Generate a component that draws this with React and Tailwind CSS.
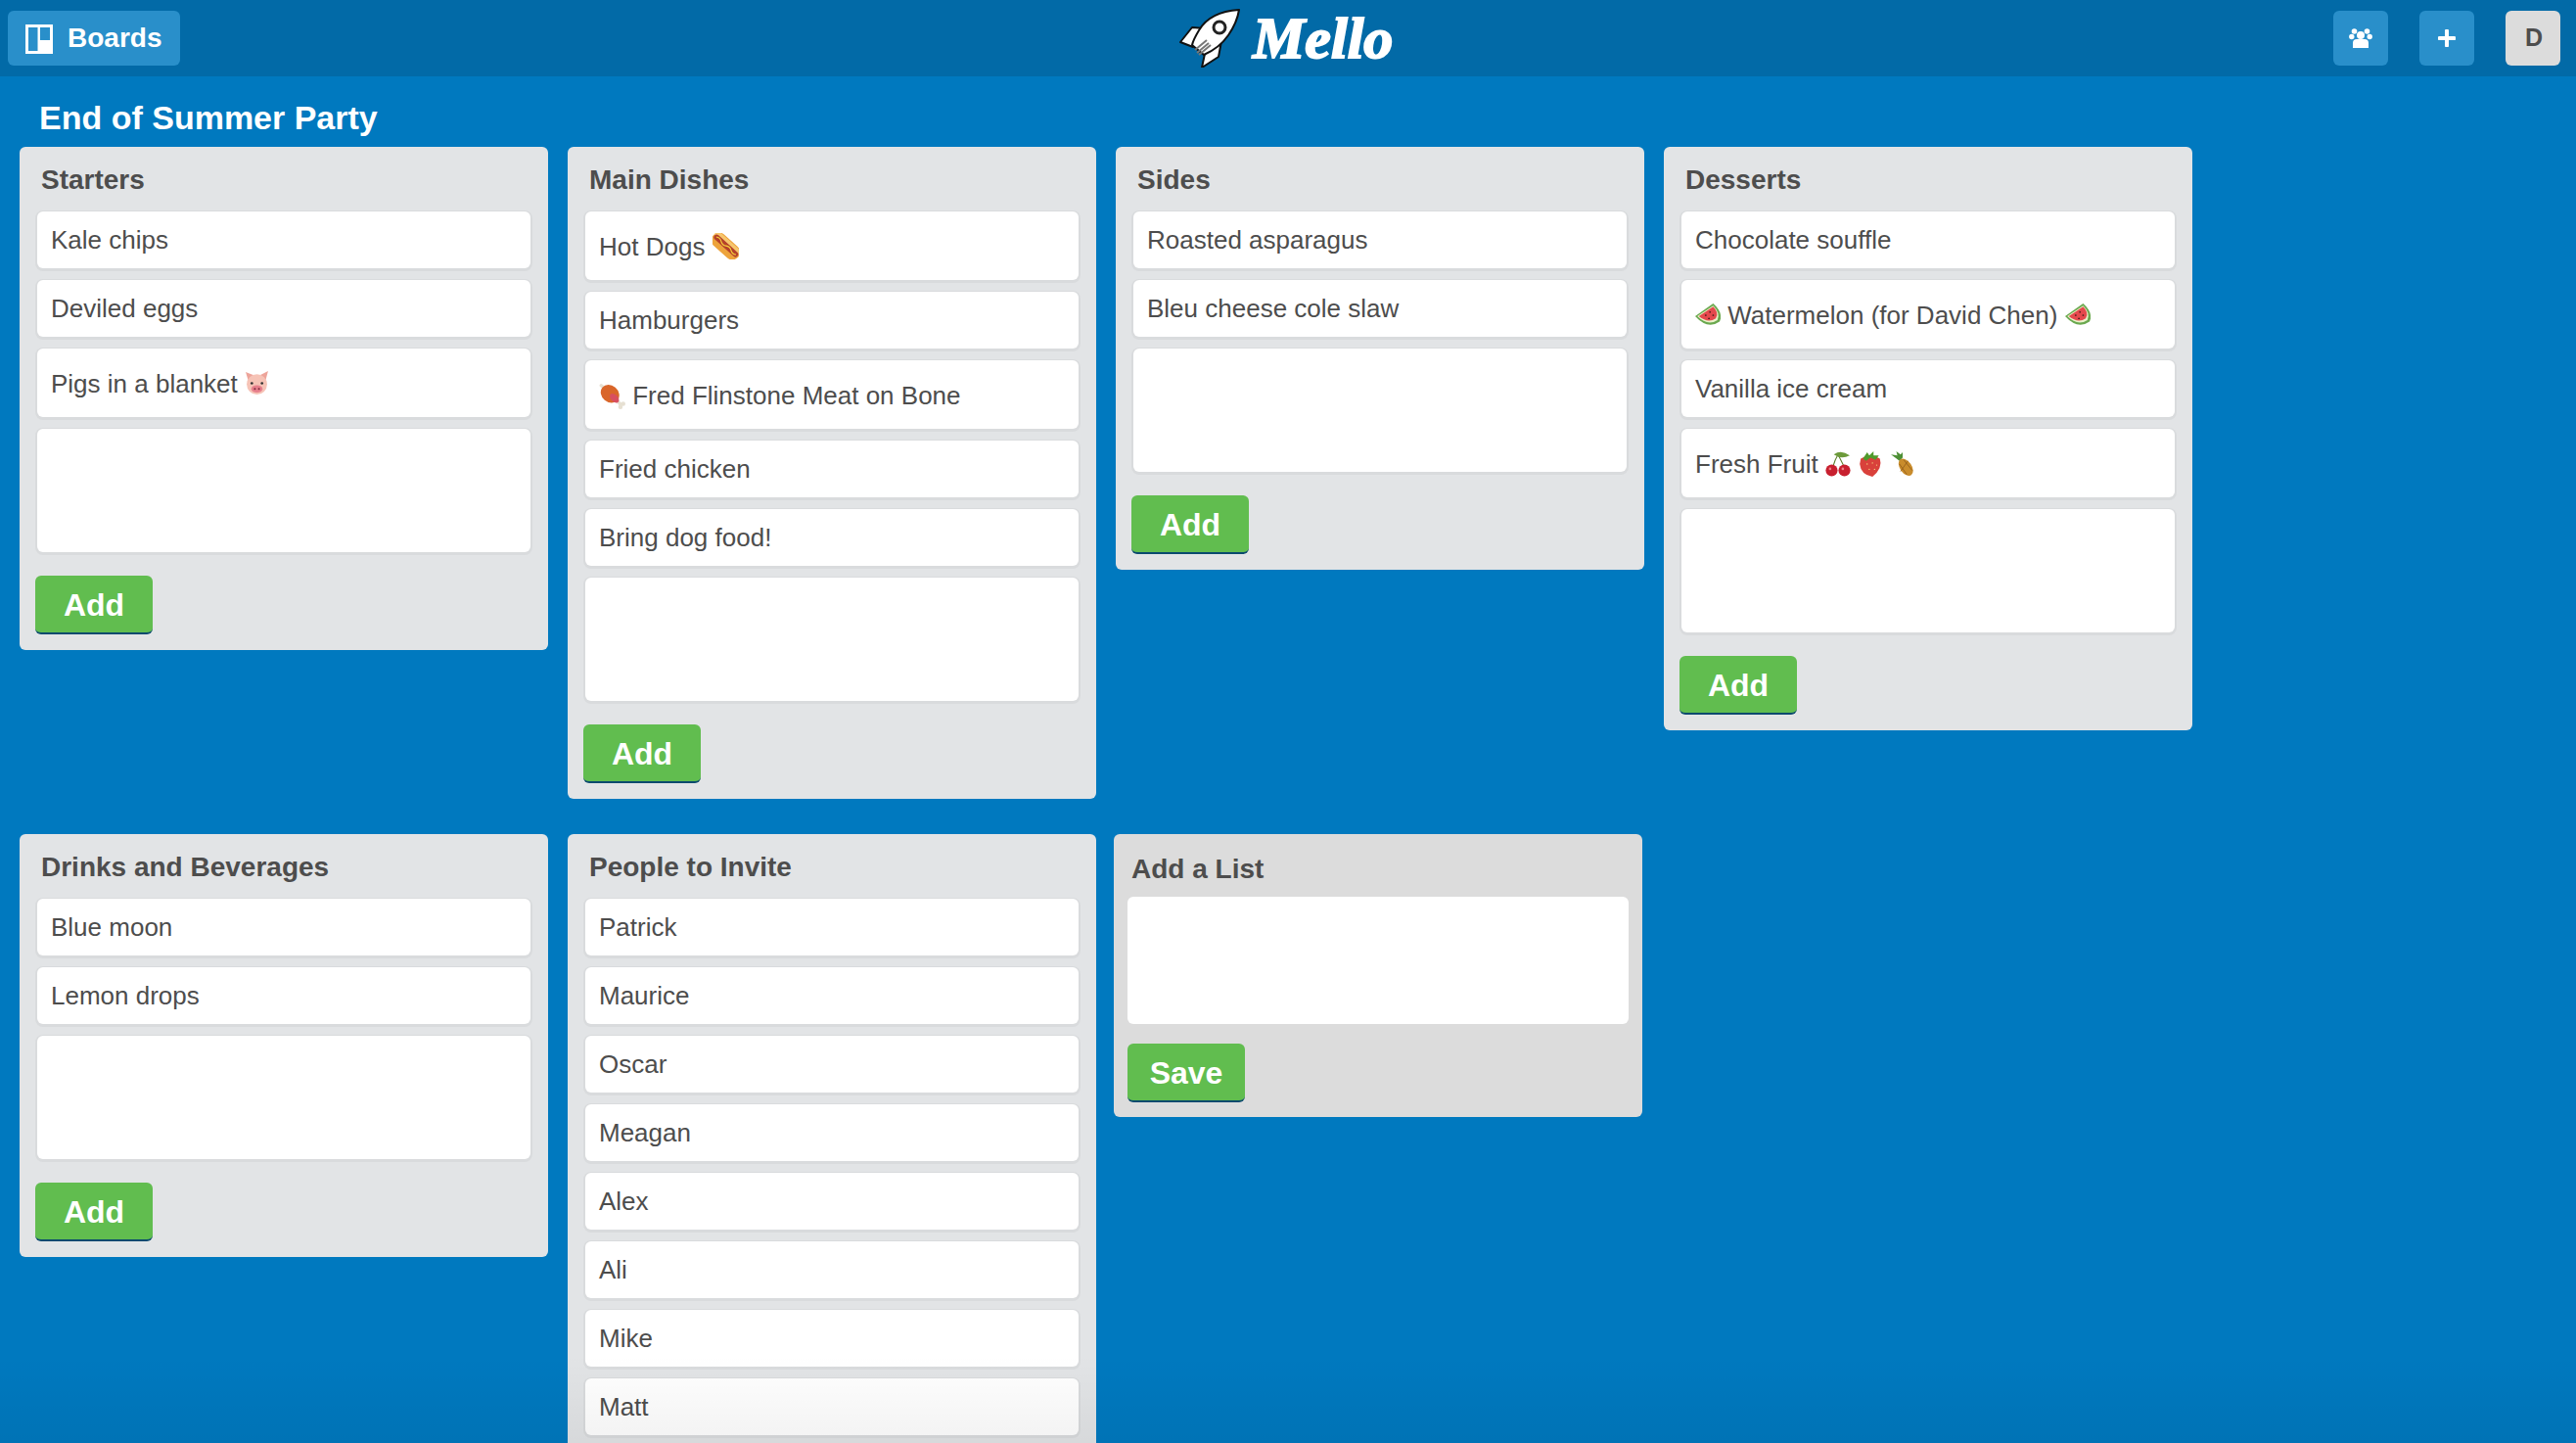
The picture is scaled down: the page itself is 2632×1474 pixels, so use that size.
import React from 'react';

const FONT = "font-['Liberation_Sans',Arial,sans-serif]";

function Pig() {
  return (
    <svg viewBox="0 0 24 24" className="inline-block w-[25px] h-[25px] align-[-3px]">
      <path d="M1 1 L9 4 L4 11Z M23 0 L15 4 L20 11Z" fill="#eda49a" />
      <ellipse cx="12" cy="13" rx="10" ry="10" fill="#f6c3b6" />
      <circle cx="7" cy="12" r="1.300" fill="#333" />
      <circle cx="17" cy="12" r="1.300" fill="#333" />
      <ellipse cx="12" cy="17.500" rx="5.500" ry="3.600" fill="#e77f8c" />
      <circle cx="10" cy="17.500" r="1" fill="#7d2b3a" />
      <circle cx="14" cy="17.500" r="1" fill="#7d2b3a" />
    </svg>
  );
}

function HotDog() {
  return (
    <svg viewBox="0 0 24 24" className="inline-block w-[27px] h-[27px] align-[-4px]">
      <g transform="rotate(42 12 12)">
        <rect x="-3" y="5" width="30" height="14" rx="7" fill="#eda33c" />
        <rect x="-3" y="6" width="30" height="6" rx="3" fill="#f7c66d" />
        <rect x="-2" y="9" width="28" height="5" rx="2.500" fill="#b5412a" />
        <path d="M0 11.500 Q3 9.500 6 11.500 T12 11.500 T18 11.500 T24 11.500" fill="none" stroke="#f6d23b" strokeWidth="1" />
      </g>
    </svg>
  );
}

function Meat() {
  return (
    <svg viewBox="0 0 24 24" className="inline-block w-[27px] h-[27px] align-[-5px]">
      <path d="M15 15 L20 20" stroke="#e6e0d2" strokeWidth="3" strokeLinecap="round" />
      <circle cx="22" cy="19" r="2" fill="#e6e0d2" />
      <circle cx="19.500" cy="22" r="2" fill="#e6e0d2" />
      <path d="M5 5 L2 2.500" stroke="#e6e0d2" strokeWidth="3" strokeLinecap="round" />
      <ellipse cx="10" cy="10" rx="9" ry="7.500" transform="rotate(40 10 10)" fill="#d9662a" />
      <ellipse cx="14" cy="14" rx="3.200" ry="5" transform="rotate(-45 14 14)" fill="#d84f5f" />
    </svg>
  );
}

function Watermelon() {
  return (
    <svg viewBox="0 0 24 24" className="inline-block w-[26px] h-[26px] align-[-4px]">
      <path d="M0 13 L17 1 Q27 10 23 18 Q12 26 0 13Z" fill="#6aa84f" />
      <path d="M2 13 L17 3 Q24 10 21 16.500 Q12 22.500 2 13Z" fill="#e9f2c9" />
      <path d="M3.500 13 L17 4 Q23 10 19.500 15 Q12 20 3.500 13Z" fill="#e5484d" />
      <g fill="#3a1d16">
        <circle cx="10" cy="12" r=".8" /><circle cx="14" cy="9" r=".8" /><circle cx="17" cy="12" r=".8" /><circle cx="13" cy="15" r=".8" />
      </g>
    </svg>
  );
}

function Cherries() {
  return (
    <svg viewBox="0 0 24 24" className="inline-block w-[26px] h-[26px] align-[-4px]">
      <path d="M7 15 Q9 8 12 3 Q15 9 18 15" fill="none" stroke="#5d7f2c" strokeWidth="1" />
      <path d="M8 3 Q15 -2 23 4 Q15 8 8 3Z" fill="#6c9a3a" />
      <circle cx="6" cy="18" r="5.600" fill="#c8202f" />
      <circle cx="18" cy="18" r="5.600" fill="#c8202f" />
      <circle cx="4.500" cy="16.500" r="1.200" fill="#ef8088" />
      <circle cx="16.500" cy="16.500" r="1.200" fill="#ef8088" />
    </svg>
  );
}

function Strawberry() {
  return (
    <svg viewBox="0 0 24 24" className="inline-block w-[26px] h-[26px] align-[-4px]">
      <path d="M3 7 Q12 1 21 7 Q24 16 14 24 Q3 22 2 12Z" fill="#d9413b" />
      <path d="M5 7 L9 1 L11 4 L15 0 L15 4 L20 4 L17 8 L12 6 L8 9Z" fill="#4f9a2c" />
      <g fill="#f4d67c">
        <circle cx="9" cy="12" r=".6" /><circle cx="14" cy="11" r=".6" /><circle cx="18" cy="13" r=".6" /><circle cx="11" cy="17" r=".6" /><circle cx="16" cy="17" r=".6" />
      </g>
    </svg>
  );
}

function Pineapple() {
  return (
    <svg viewBox="0 0 24 24" className="inline-block w-[26px] h-[26px] align-[-4px]">
      <path d="M9 9 L1 3 L7 4 L6 0 L10 3 L12 1 L12 6Z" fill="#4d8f35" />
      <ellipse cx="15" cy="15" rx="5.500" ry="9" transform="rotate(-35 15 15)" fill="#c98c2c" />
      <path d="M9 12 L16 22 M13 8 L21 18 M17 9 L10 19" stroke="#8f5a18" strokeWidth=".7" />
    </svg>
  );
}

function BoardsIcon() {
  return (
    <svg viewBox="0 0 28 31" className="w-7 h-[31px]">
      <path fillRule="evenodd" fill="#fff" d="M0 1h28v30H0Z M3 4v24h9.500V4Z M15 4v13h10V4Z" />
    </svg>
  );
}

function PeopleIcon() {
  return (
    <svg viewBox="0 0 24 20" className="w-6 h-[22px]" fill="#fff">
      <circle cx="5.500" cy="3" r="2.800" />
      <circle cx="18.500" cy="3" r="2.800" />
      <circle cx="2.800" cy="8.500" r="2.700" />
      <circle cx="21.200" cy="8.500" r="2.700" />
      <circle cx="12" cy="7" r="4" />
      <path d="M4 20 V15 Q4 11 8 11 H16 Q20 11 20 15 V20Z" />
    </svg>
  );
}

function Rocket() {
  return (
    <svg viewBox="0 0 64 60" className="w-16 h-[60px]">
      <path d="M3 34 L15 19 L28 20 L16 39Z" fill="#fff" stroke="#111" strokeWidth="2" strokeLinejoin="round" />
      <path d="M25 60 L42 49 L45 33 L28 46Z" fill="#fff" stroke="#111" strokeWidth="2" strokeLinejoin="round" />
      <path d="M63 1 Q33 3 22 22 Q16 32 15 37 L27 47 Q43 40 52 27 Q61 14 63 1Z" fill="#fff" stroke="#111" strokeWidth="2" strokeLinejoin="round" />
      <circle cx="43" cy="19" r="6" fill="#fff" stroke="#222" strokeWidth="3" />
      <path d="M18 42 L30 32 M20 45 L32 35 M22 47 L34 37" stroke="#777" strokeWidth="2" />
    </svg>
  );
}

function HeaderButton({ children, className }) {
  return (
    <div className={`w-14 h-14 rounded-md flex items-center justify-center ${className || 'bg-[#298fca]'}`}>
      {children}
    </div>
  );
}

function Header() {
  return (
    <div className="relative h-[78px] bg-[#026aa7] flex items-center justify-between pl-2 pr-4">
      <div className="flex items-center w-44 h-14 rounded-md bg-[#298fca] pl-[18px] gap-[15px]">
        <BoardsIcon />
        <span className="text-[28px] font-bold text-white leading-none">Boards</span>
      </div>
      {/* logo sits centred over the bar */}
      <div className="absolute left-[1203px] top-[9px] flex items-center gap-[13px]">
        <Rocket />
        <span className="font-['Liberation_Serif',serif] italic font-bold text-[60px] leading-[60px] text-white [-webkit-text-stroke:2px_#fff]">Mello</span>
      </div>
      <div className="flex gap-8">
        <HeaderButton><PeopleIcon /></HeaderButton>
        <HeaderButton>
          <svg viewBox="0 0 18 18" className="w-[18px] h-[18px]">
            <path d="M9 1.500V16.500M1.500 9H16.500" stroke="#fff" strokeWidth="4" strokeLinecap="round" />
          </svg>
        </HeaderButton>
        <HeaderButton className="bg-[#dcdcdc]">
          <span className="pl-[2px] text-[25px] font-bold text-[#4d4d4d]">D</span>
        </HeaderButton>
      </div>
    </div>
  );
}

function Card({ item }) {
  const tall = typeof item !== 'string';
  return (
    <div className={`flex items-center px-[14px] bg-white rounded-md shadow-[0_1px_0_2px_#d9dbdd] text-[26px] text-[#4d4d4d] ${tall ? 'h-[70px] pt-[2px]' : 'h-[58px] pt-px'}`}>
      <span className="whitespace-pre">{item}</span>
    </div>
  );
}

function GreenButton({ label }) {
  return (
    <button className="block w-[120px] h-[60px] pt-[2px] rounded-md bg-[#61bd4f] border-b-2 border-[#0b4a6e] text-[32px] font-bold text-white">
      {label}
    </button>
  );
}

function List({ title, items, clipped }) {
  return (
    <div className="w-[540px] self-start rounded-md bg-[#e2e4e6] pb-4">
      <div className="h-[66px] pl-[22px] pt-[2px] flex items-center text-[28px] font-bold text-[#4d4d4d]">{title}</div>
      <div className="px-[18px] flex flex-col gap-3">
        {items.map((item, i) => <Card key={i} item={item} />)}
        {!clipped && <textarea className="block h-[126px] bg-white rounded-md shadow-[0_1px_0_2px_#d9dbdd] resize-none" />}
      </div>
      {!clipped && (
        <div className="pl-4 pt-6">
          <GreenButton label="Add" />
        </div>
      )}
    </div>
  );
}

function AddList() {
  return (
    <div className="w-[540px] self-start -ml-[2px] rounded-md bg-[#dcdcdc] px-[14px] pb-[15px]">
      <div className="h-[64px] pl-[4px] pt-[8px] flex items-center text-[28px] font-bold text-[#4d4d4d]">Add a List</div>
      <textarea className="block w-full h-[130px] bg-white rounded-md resize-none" />
      <div className="pt-5">
        <GreenButton label="Save" />
      </div>
    </div>
  );
}

const LISTS = [
  { title: 'Starters', items: ['Kale chips', 'Deviled eggs', <>Pigs in a blanket <Pig /></>] },
  {
    title: 'Main Dishes',
    items: [
      <>Hot Dogs <HotDog /></>,
      'Hamburgers',
      <><Meat /> Fred Flinstone Meat on Bone</>,
      'Fried chicken',
      'Bring dog food!',
    ],
  },
  { title: 'Sides', items: ['Roasted asparagus', 'Bleu cheese cole slaw'] },
  {
    title: 'Desserts',
    items: [
      'Chocolate souffle',
      <><Watermelon /> Watermelon (for David Chen) <Watermelon /></>,
      'Vanilla ice cream',
      <>Fresh Fruit <Cherries /> <Strawberry /> <Pineapple /></>,
    ],
  },
  { title: 'Drinks and Beverages', items: ['Blue moon', 'Lemon drops'] },
  {
    title: 'People to Invite',
    clipped: true, // runs past the bottom of the window
    items: ['Patrick', 'Maurice', 'Oscar', 'Meagan', 'Alex', 'Ali', 'Mike', 'Matt'],
  },
];

export default function App() {
  return (
    <div className={`${FONT} relative h-[1474px] overflow-hidden bg-[#0079bf]`}>
      <Header />
      <h1 className="h-[72px] pl-10 pt-3 flex items-center text-[34px] font-bold text-white">End of Summer Party</h1>
      <div className="flex flex-wrap gap-x-5 gap-y-[36px] pl-5">
        {LISTS.map((l) => <List key={l.title} {...l} />)}
        <AddList />
      </div>
      {/* fade at the bottom edge of the window */}
      <div className="absolute left-0 right-0 bottom-0 h-[90px] bg-gradient-to-b from-transparent to-black/5 pointer-events-none" />
    </div>
  );
}
